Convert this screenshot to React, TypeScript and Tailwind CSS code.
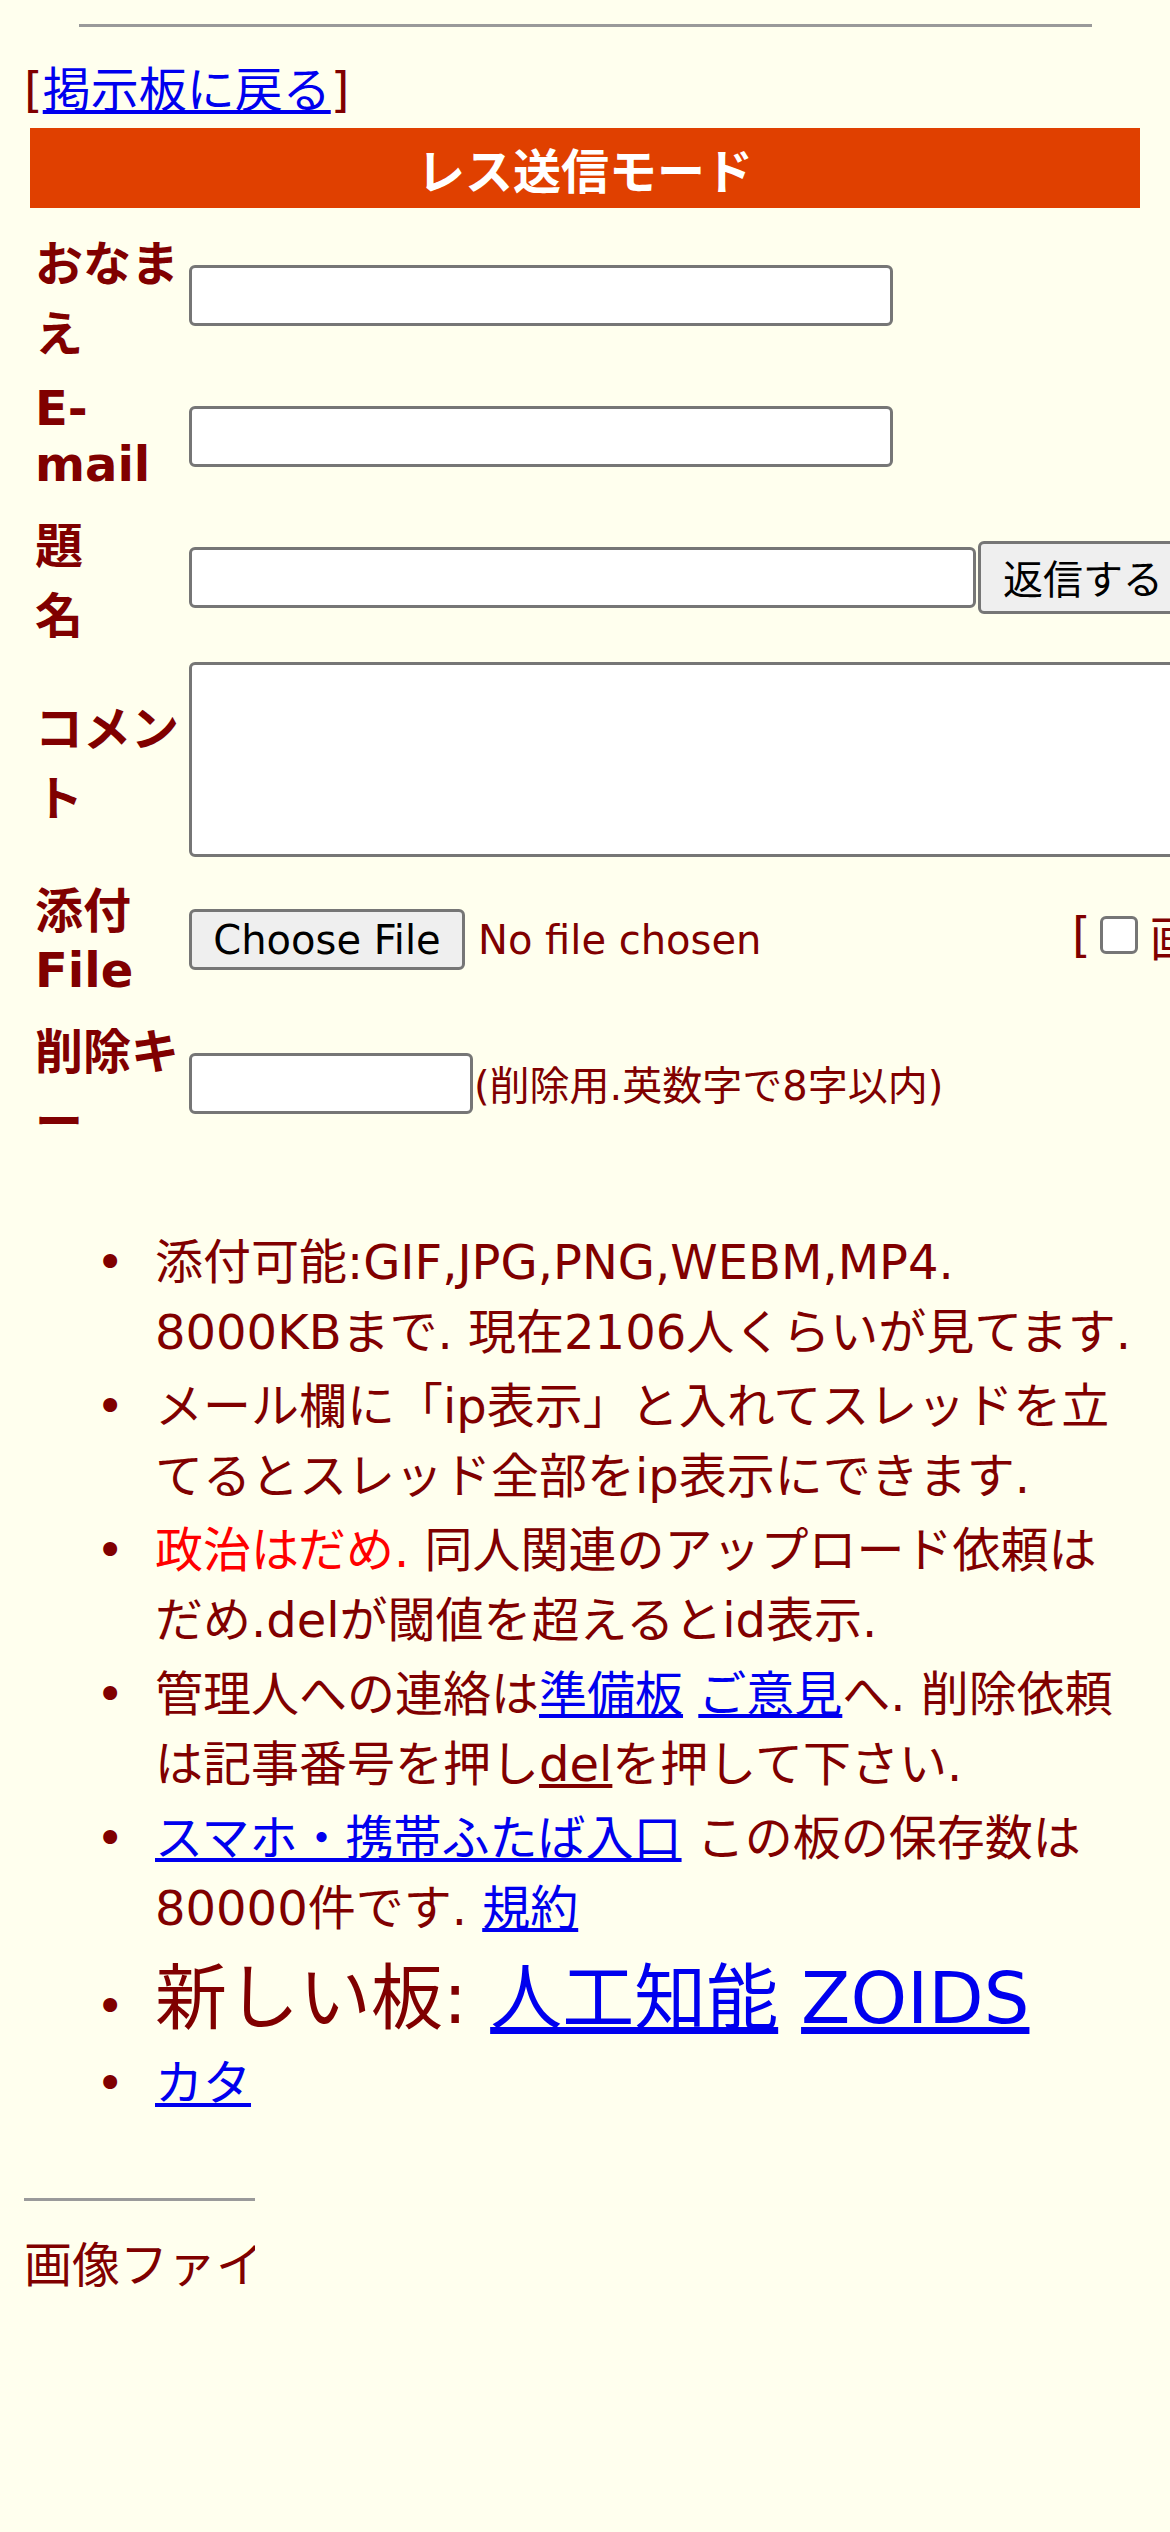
const inputBox = "h-[61px] shrink-0 rounded-[6px] border-[3px] border-[#767676] bg-white";
const link = "text-[#0000ee] underline";

const Row = ({ label, children }: { label: React.ReactNode; children: React.ReactNode }) => (
  <div className="flex items-center gap-[10px]">
    <div className="w-[144px] shrink-0 whitespace-nowrap font-bold">{label}</div>
    {children}
  </div>
);

const Item = ({ children, spaced }: { children: React.ReactNode; spaced?: boolean }) => (
  <li className={spaced ? "mb-[4px] flex items-baseline" : "flex items-baseline"}>
    <span className="w-[59px] shrink-0">•</span>
    <div className="min-w-0 flex-1">{children}</div>
  </li>
);

const App = () => {
  return (
    <div className="min-h-[2532px] w-[1170px] overflow-hidden bg-[#ffffee] px-[24px] pt-[24px] font-['DejaVu_Sans','Noto_Sans_CJK_JP',sans-serif] text-[48px] leading-[normal] text-[#800000]">
      <hr className="mx-auto w-[1013px] border-0 border-t-[3px] border-t-[#9a9a9a]" />

      <div className="mt-[24px]">
        [<a className={link}>掲示板に戻る</a>]
      </div>

      <div className="mx-[6px] mt-[7px] bg-[#e04000] py-[5px] text-center font-bold text-white">
        レス送信モード
      </div>

      <form className="mt-[17px] flex flex-col gap-[15px] pl-[11px]">
        <Row label={<>おなま<br />え</>}>
          <input type="text" className={`${inputBox} w-[704px]`} />
        </Row>
        <Row label={<>E-<br />mail</>}>
          <input type="text" className={`${inputBox} w-[704px]`} />
        </Row>
        <Row label={<>題<br />名</>}>
          <input type="text" className={`${inputBox} w-[787px]`} />
          <button
            type="button"
            className="-ml-[8px] h-[73px] shrink-0 rounded-[6px] border-[3px] border-[#767676] bg-[#efefef] px-[22px] text-[40px] whitespace-nowrap text-black"
          >
            返信する
          </button>
        </Row>
        <Row label={<>コメン<br />ト</>}>
          <textarea className="h-[195px] w-[1100px] shrink-0 resize-none rounded-[6px] border-[3px] border-[#767676] bg-white" />
        </Row>
        <Row label={<>添付<br />File</>}>
          <div className="mt-[9px] flex w-[886px] shrink-0 items-center">
            <span className="flex h-[61px] w-[276px] shrink-0 items-center justify-center rounded-[6px] border-[3px] border-[#767676] bg-[#efefef] text-[40px] text-black">
              Choose File
            </span>
            <span className="ml-[13px] whitespace-nowrap text-[40px]">No file chosen</span>
          </div>
          <div className="-ml-[13px] flex shrink-0 items-center whitespace-nowrap">
            [
            <span className="ml-[9px] mr-[12px] h-[38px] w-[38px] shrink-0 rounded-[6px] border-[3px] border-[#767676] bg-white" />
            画像なし]
          </div>
        </Row>
        <Row label={<>削除キ<br />ー</>}>
          <input type="password" className={`${inputBox} w-[284px]`} />
          <span className="-ml-[9px] whitespace-nowrap text-[40px]">(削除用.英数字で8字以内)</span>
        </Row>
      </form>

      <ul className="mt-[70px] w-[1112px] pl-[72px]">
        <Item spaced>添付可能:GIF,JPG,PNG,WEBM,MP4. 8000KBまで. 現在2106人くらいが見てます.</Item>
        <Item spaced>メール欄に「ip表示」と入れてスレッドを立てるとスレッド全部をip表示にできます.</Item>
        <Item spaced>
          <span className="text-[#ff0000]">政治はだめ.</span> 同人関連のアップロード依頼はだめ.delが閾値を超えるとid表示.
        </Item>
        <Item spaced>
          管理人への連絡は<a className={link}>準備板</a> <a className={link}>ご意見</a>へ. 削除依頼は記事番号を押し
          <span className="underline">del</span>を押して下さい.
        </Item>
        <Item>
          <a className={link}>スマホ・携帯ふたば入口</a> この板の保存数は80000件です. <a className={link}>規約</a>
        </Item>
        <Item>
          <span className="text-[72px]">
            新しい板: <a className={link}>人工知能</a> <a className={link}>ZOIDS</a>
          </span>
        </Item>
        <Item>
          <a className={link}>カタ</a>
        </Item>
      </ul>

      <div className="mt-[84px] w-[231px] overflow-hidden">
        <hr className="border-0 border-t-[3px] border-t-[#9a9a9a]" />
        <div className="mt-[25px] whitespace-nowrap">画像ファイル名：</div>
      </div>
    </div>
  );
};

export default App;
